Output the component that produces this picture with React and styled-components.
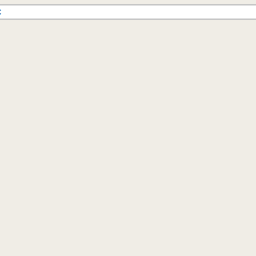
import styled, { createGlobalStyle } from "styled-components";

const GlobalStyle = createGlobalStyle`
  html, body {
    margin: 0;
    padding: 0;
    background: #f0ede6;
  }
  #root {
    min-height: 256px;
  }
`;

const Page = styled.div`
  display: flex;
  flex-direction: column;
  min-height: 256px;
  padding-top: 4px;
  background: #f0ede6;
  font-family: "Liberation Sans", Arial, sans-serif;
`;

const SearchBar = styled.div`
  display: flex;
  align-items: center;
  height: 12px;
  overflow: hidden;
  background: #ffffff;
  border-top: 1px solid #c6c6c6;
  border-bottom: 1px solid #c6c6c6;
  box-shadow: inset 0 1px 0 #e2e2e2, inset 0 -1px 0 #e2e2e2;
  padding: 1px 0;
`;

const QueryText = styled.span`
  margin-left: -4px;
  font-size: 10px;
  line-height: 12px;
  color: #111;
  white-space: nowrap;
  -webkit-font-smoothing: antialiased;
`;

export default function App() {
  return (
    <>
      <GlobalStyle />
      <Page>
        <SearchBar>
          <QueryText>c</QueryText>
        </SearchBar>
      </Page>
    </>
  );
}
